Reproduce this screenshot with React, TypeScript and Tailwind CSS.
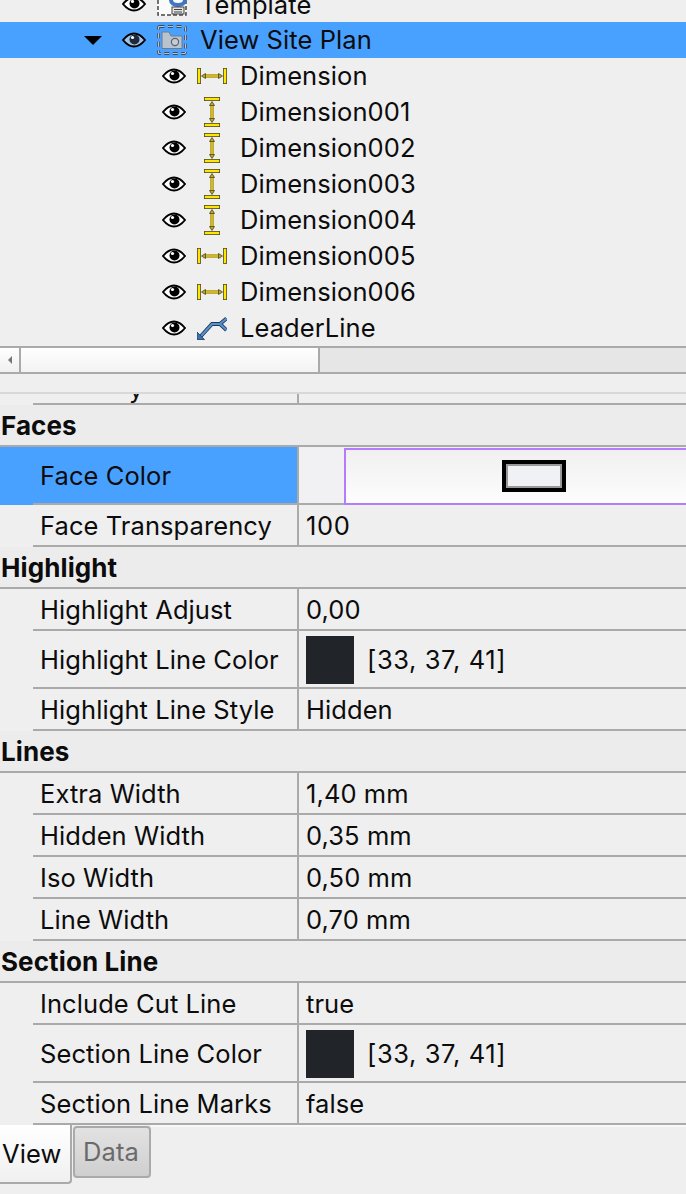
import type { ReactNode } from "react";

function Eye({ selected }: { selected?: boolean }) {
  return (
    <svg width="24" height="16" viewBox="0 0 24 16" className="shrink-0">
      <path
        d="M1 8C5 3 8.500 1.500 12 1.500S19 3 23 8C19 13 15.500 14.500 12 14.500S5 13 1 8Z"
        fill={selected ? "#9fc4e8" : "#ffffff"}
        stroke="#000"
        strokeWidth="2"
      />
      <circle cx="12.500" cy="7.500" r="5" fill={selected ? "#1d2a3a" : "#000"} />
      <circle cx="10.500" cy="5.500" r="1.600" fill="#fff" />
    </svg>
  );
}

function DimH() {
  return (
    <svg width="30" height="16" viewBox="0 0 30 16" className="shrink-0">
      <rect x="0.400" y="0.400" width="3.200" height="15.200" fill="#ffe600" stroke="#4a4a20" strokeWidth="0.800" />
      <rect x="26.400" y="0.400" width="3.200" height="15.200" fill="#ffe600" stroke="#4a4a20" strokeWidth="0.800" />
      <rect x="7" y="6.500" width="16" height="3" fill="#d2b920" stroke="#a09028" strokeWidth="0.600" />
      <path d="M4.500 8 8.500 5.500V10.500Z" fill="#c8ad00" stroke="#333" strokeWidth="0.700" />
      <path d="M25.500 8 21.500 5.500V10.500Z" fill="#c8ad00" stroke="#333" strokeWidth="0.700" />
    </svg>
  );
}

function DimV() {
  return (
    <svg width="30" height="30" viewBox="0 0 30 30" className="shrink-0">
      <rect x="7.400" y="0.400" width="15.200" height="3.200" fill="#ffe600" stroke="#4a4a20" strokeWidth="0.800" />
      <rect x="7.400" y="26.400" width="15.200" height="3.200" fill="#ffe600" stroke="#4a4a20" strokeWidth="0.800" />
      <rect x="13.500" y="7" width="3" height="16" fill="#d2b920" stroke="#a09028" strokeWidth="0.600" />
      <path d="M15 4.500 12.500 8.500H17.500Z" fill="#c8ad00" stroke="#333" strokeWidth="0.700" />
      <path d="M15 25.500 12.500 21.500H17.500Z" fill="#c8ad00" stroke="#333" strokeWidth="0.700" />
    </svg>
  );
}

function Leader() {
  return (
    <svg width="30" height="24" viewBox="0 0 30 24" className="shrink-0">
      <path d="M4 20 15 8H23L29.500 2.500M23 8 29.500 14" fill="none" stroke="#1d3a5c" strokeWidth="3.800" />
      <path d="M4 20 15 8H23L29.500 2.500M23 8 29.500 14" fill="none" stroke="#5a90cc" strokeWidth="2.200" />
      <path d="M0 23.500V16L7.500 23.500Z" fill="#3a72b4" stroke="#1d3a5c" strokeWidth="0.800" />
    </svg>
  );
}

function ViewFolder() {
  return (
    <svg width="30" height="30" viewBox="0 0 30 30" className="shrink-0">
      <rect x="1.500" y="1.500" width="27" height="27" rx="1" fill="none" stroke="#3d4a5a" strokeWidth="2.800" strokeDasharray="5 3.500" />
      <rect x="1.500" y="1.500" width="27" height="27" rx="1" fill="none" stroke="#b9c4d0" strokeWidth="1.200" strokeDasharray="5 3.500" />
      <path d="M5 7H12L14 11H25V23.500H5Z" fill="#b8c3ce" stroke="#6e7a88" />
      <circle cx="18" cy="17" r="3.600" fill="#c4ccd6" stroke="#59636e" strokeWidth="1.200" />
    </svg>
  );
}

function TemplateIcon() {
  return (
    <svg width="30" height="16" viewBox="0 0 30 16" className="shrink-0">
      <rect x="0" y="0" width="30" height="16" fill="#fbfbfb" />
      <path d="M1 0V15H29V0" fill="none" stroke="#444" strokeWidth="1.500" strokeDasharray="4 2" />
      <path d="M14 0C14 3 17 5 21 5S28 3 28 0" fill="none" stroke="#3f78c0" strokeWidth="4" />
      <rect x="15" y="7" width="12" height="7" fill="#e4e4e4" stroke="#444" />
      <path d="M17 9.500H25M17 12H25" stroke="#444" />
    </svg>
  );
}

const children: { name: string; icon: ReactNode }[] = [
  { name: "Dimension", icon: <DimH /> },
  { name: "Dimension001", icon: <DimV /> },
  { name: "Dimension002", icon: <DimV /> },
  { name: "Dimension003", icon: <DimV /> },
  { name: "Dimension004", icon: <DimV /> },
  { name: "Dimension005", icon: <DimH /> },
  { name: "Dimension006", icon: <DimH /> },
  { name: "LeaderLine", icon: <Leader /> },
];

function Section({ title }: { title: string }) {
  return (
    <div className="h-[42px] flex items-center pt-[1px] bg-[#ececec] border-b-2 border-[#aaaaaa] font-bold text-[26px] tracking-[0.1px]">
      <span className="ml-[1px]">{title}</span>
    </div>
  );
}

function Row({
  label,
  tall,
  children,
}: {
  label: string;
  tall?: boolean;
  children: ReactNode;
}) {
  return (
    <div className={`flex ${tall ? "h-[58px]" : "h-[42px]"}`}>
      <div className="w-[33px] shrink-0" />
      <div className="flex-1 flex border-b-2 border-[#aaaaaa]">
        <div className="w-[266px] shrink-0 pl-[7px] pt-[1px] flex items-center border-r-2 border-[#aaaaaa] whitespace-nowrap">
          {label}
        </div>
        <div className="flex-1 pl-[7px] pt-[1px] flex items-center whitespace-nowrap">{children}</div>
      </div>
    </div>
  );
}

function ColorValue() {
  return (
    <div className="flex items-center">
      <div className="w-[48px] h-[48px] bg-[#212529] mr-[13px]" />
      <span className="tracking-[0.6px]">[33, 37, 41]</span>
    </div>
  );
}

export default function App() {
  return (
    <div
      className="w-[686px] h-[1194px] overflow-hidden bg-[#efefef] text-[#0c0c0c] text-[25.5px] leading-[30px] tracking-[0.08px]"
      style={{ fontFamily: "Inter, 'Noto Sans', sans-serif" }}
    >
      {/* Tree */}
      <div className="h-[22px] overflow-hidden flex items-end pl-[122px]">
        <div className="flex items-center h-[36px] shrink-0">
          <Eye />
          <div className="w-[11px]" />
          <div className="h-[36px] pt-[14px]">
            <TemplateIcon />
          </div>
          <div className="ml-[13px] h-[36px] pt-[1px] flex items-center">Template</div>
        </div>
      </div>
      <div className="h-[36px] bg-[#48a1ff] flex items-center pl-[84px]">
        <svg width="18" height="9" viewBox="0 0 18 9" className="shrink-0 mr-[20px]">
          <path d="M0 0H18L9 9Z" fill="#000" />
        </svg>
        <Eye selected />
        <div className="w-[11px]" />
        <ViewFolder />
        <span className="ml-[13px]">View Site Plan</span>
      </div>
      {children.map((c) => (
        <div key={c.name} className="h-[36px] flex items-center pl-[162px]">
          <Eye />
          <div className="w-[11px]" />
          {c.icon}
          <span className="ml-[13px]">{c.name}</span>
        </div>
      ))}

      {/* Scrollbar */}
      <div className="h-[28px] border-y-2 border-[#aaaaaa] flex bg-[#e6e6e6]">
        <div className="w-[19px] bg-gradient-to-b from-[#ffffff] to-[#f0f0f0] flex items-center justify-center">
          <div className="w-0 h-0 border-y-[4px] border-y-transparent border-r-[4px] border-r-[#777777]" />
        </div>
        <div className="w-[301px] border-x-2 border-[#aaaaaa] bg-gradient-to-b from-[#ffffff] to-[#f3f3f3]" />
      </div>

      {/* Property editor */}
      <div className="h-[18px]" />
      <div className="h-[13px] border-t-2 border-[#d8d8d8] flex overflow-hidden">
        <div className="w-[33px] shrink-0" />
        <div className="flex-1 flex border-b-2 border-[#aaaaaa]">
          <div className="w-[266px] border-r-2 border-[#aaaaaa] relative overflow-hidden">
            <span className="absolute left-[96px] -top-[20px]">y</span>
          </div>
        </div>
      </div>
      <Section title="Faces" />

      <div className="flex h-[58px]">
        <div className="w-[297px] shrink-0 bg-[#48a1ff] flex flex-col">
          <div className="flex-1 pl-[40px] pt-[1px] flex items-center">Face Color</div>
          <div className="h-[2px] ml-[33px] bg-[#aaaaaa]" />
        </div>
        <div className="w-[2px] bg-[#aaaaaa]" />
        <div className="w-[45px] bg-[#f1f1f4] flex flex-col">
          <div className="flex-1" />
          <div className="h-[2px] bg-[#aaaaaa]" />
        </div>
        <div className="flex-1 -mr-[4px] mt-[1px] border-2 border-[#b57bff] bg-gradient-to-b from-[#f0f0f0] to-[#fdfdfd] flex items-center pl-[156px]">
          <div className="w-[64px] h-[32px] mb-[1px] border-4 border-black bg-[#f0f1f4] shadow-[inset_0_0_0_2px_#999999]" />
        </div>
      </div>

      <Row label="Face Transparency">
        <span className="tracking-[0.6px]">100</span>
      </Row>
      <Section title="Highlight" />
      <Row label="Highlight Adjust">0,00</Row>
      <Row label="Highlight Line Color" tall>
        <ColorValue />
      </Row>
      <Row label="Highlight Line Style">Hidden</Row>
      <Section title="Lines" />
      <Row label="Extra Width">1,40 mm</Row>
      <Row label="Hidden Width">0,35 mm</Row>
      <Row label="Iso Width">0,50 mm</Row>
      <Row label="Line Width">0,70 mm</Row>
      <Section title="Section Line" />
      <Row label="Include Cut Line">true</Row>
      <Row label="Section Line Color" tall>
        <ColorValue />
      </Row>
      <Row label="Section Line Marks">false</Row>

      {/* Tabs */}
      <div className="flex items-start">
        <div className="w-[72px] h-[59px] bg-gradient-to-b from-[#ffffff] to-[#f0f0f0] border-r-2 border-b-2 border-[#aaaaaa] rounded-br-[4px] pl-[2px] pt-[14px]">
          View
        </div>
        <div className="w-[78px] h-[52px] mt-[1px] ml-[1px] bg-gradient-to-b from-[#e2e2e2] to-[#cfcfcf] border-2 border-[#aaaaaa] rounded-[4px] pl-[8px] flex items-center text-[#6a6a6a]">
          Data
        </div>
        <div className="flex-1 h-[2px] bg-[#f8f8f8]" />
      </div>
    </div>
  );
}
